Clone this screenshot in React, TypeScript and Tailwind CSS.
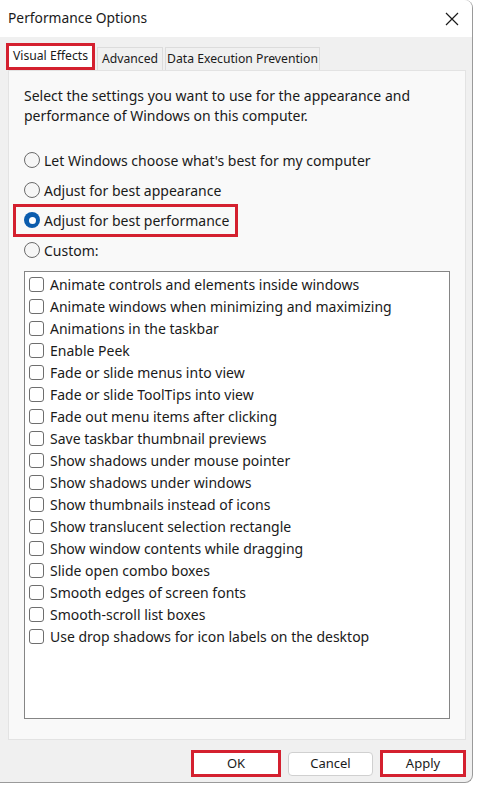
import { useState } from "react"

const effects = [
  "Animate controls and elements inside windows",
  "Animate windows when minimizing and maximizing",
  "Animations in the taskbar",
  "Enable Peek",
  "Fade or slide menus into view",
  "Fade or slide ToolTips into view",
  "Fade out menu items after clicking",
  "Save taskbar thumbnail previews",
  "Show shadows under mouse pointer",
  "Show shadows under windows",
  "Show thumbnails instead of icons",
  "Show translucent selection rectangle",
  "Show window contents while dragging",
  "Slide open combo boxes",
  "Smooth edges of screen fonts",
  "Smooth-scroll list boxes",
  "Use drop shadows for icon labels on the desktop",
]

const modes = [
  { id: "auto", label: "Let Windows choose what's best for my computer" },
  { id: "appearance", label: "Adjust for best appearance" },
  { id: "performance", label: "Adjust for best performance" },
  { id: "custom", label: "Custom:" },
]

function Radio({ checked }: { checked: boolean }) {
  if (checked) {
    return (
      <span className="flex h-4 w-4 shrink-0 items-center justify-center rounded-full bg-[#0b5cad]">
        <span className="h-[7px] w-[7px] rounded-full bg-white" />
      </span>
    )
  }
  return <span className="h-4 w-4 shrink-0 rounded-full border border-[#6b6b6b] bg-[#f6f6f6]" />
}

export default function App() {
  const [mode, setMode] = useState("performance")
  const [checked, setChecked] = useState<boolean[]>(effects.map(() => false))

  return (
    <div className="h-[785px] w-[477px] overflow-hidden bg-white font-['Noto_Sans',sans-serif] text-[#1a1a1a]">
      <div className="flex h-[783px] w-[473px] flex-col rounded-tr-[8px] rounded-br-[8px] border-r border-b border-[#9a9a9a] bg-[#f0f0f0]">
        {/* title bar */}
        <div className="flex h-[37px] shrink-0 items-center justify-between rounded-tr-[8px] bg-white pl-2 pr-[13px]">
          <span className="text-[13.8px]">Performance Options</span>
          <svg width="14" height="14" viewBox="0 0 14 14" className="text-[#1a1a1a]">
            <path d="M1 1 L13 13 M13 1 L1 13" stroke="currentColor" strokeWidth="1.2" fill="none" />
          </svg>
        </div>

        {/* tabs */}
        <div className="flex h-[33px] shrink-0 items-end whitespace-nowrap pl-[6px] text-[12.2px]">
          <div className="flex h-[27px] w-[89px] items-center justify-center border-[3px] border-[#d4202f] bg-white">
            Visual Effects
          </div>
          <div className="ml-[2px] flex h-[23px] w-[66px] items-center justify-center border border-b-0 border-[#dcdcdc] bg-[#f0f0f0]">
            Advanced
          </div>
          <div className="ml-[2px] flex h-[23px] w-[155px] items-center justify-center border border-b-0 border-[#dcdcdc] bg-[#f0f0f0]">
            Data Execution Prevention
          </div>
        </div>

        {/* panel */}
        <div className="ml-2 mr-[6px] flex h-[670px] shrink-0 flex-col border border-[#e3e3e3] bg-[#f9f9f9] pl-[15px] pr-[15px] pt-[15px] pb-5 text-[14px]">
          <p className="leading-[20px]">
            Select the settings you want to use for the appearance and
            <br />
            performance of Windows on this computer.
          </p>

          <div className="mt-[19px] flex flex-col">
            {modes.map((m) => (
              <div
                key={m.id}
                onClick={() => setMode(m.id)}
                className="relative flex h-[30px] cursor-default items-center gap-[4px]"
              >
                <Radio checked={mode === m.id} />
                <span>{m.label}</span>
                {m.id === "performance" && (
                  <span className="pointer-events-none absolute left-[-11px] top-[-1px] h-[33px] w-[225px] border-[3px] border-[#d4202f]" />
                )}
              </div>
            ))}
          </div>

          <div className="mt-[6px] flex-1 border border-[#858585] bg-white pt-[1px]">
            {effects.map((e, i) => (
              <div
                key={e}
                onClick={() => setChecked(checked.map((c, j) => (j === i ? !c : c)))}
                className="flex h-[22px] items-center gap-[6px] pl-1"
              >
                <span className="h-[15px] w-[15px] shrink-0 rounded-[3px] border border-[#6e6e6e] bg-white" />
                <span>{e}</span>
              </div>
            ))}
          </div>
        </div>

        {/* buttons */}
        <div className="flex flex-1 items-start justify-end pr-[6px] pt-[10px] text-[13px]">
          <button className="flex h-[27px] w-[90px] items-center justify-center border-[3px] border-[#d4202f] bg-white">
            OK
          </button>
          <button className="ml-[7px] mt-[2px] flex h-[24px] w-[85px] items-center justify-center rounded-[4px] border border-[#d0d0d0] bg-white">
            Cancel
          </button>
          <button className="ml-[7px] flex h-[27px] w-[86px] items-center justify-center border-[3px] border-[#d4202f] bg-white">
            Apply
          </button>
        </div>
      </div>
    </div>
  )
}
